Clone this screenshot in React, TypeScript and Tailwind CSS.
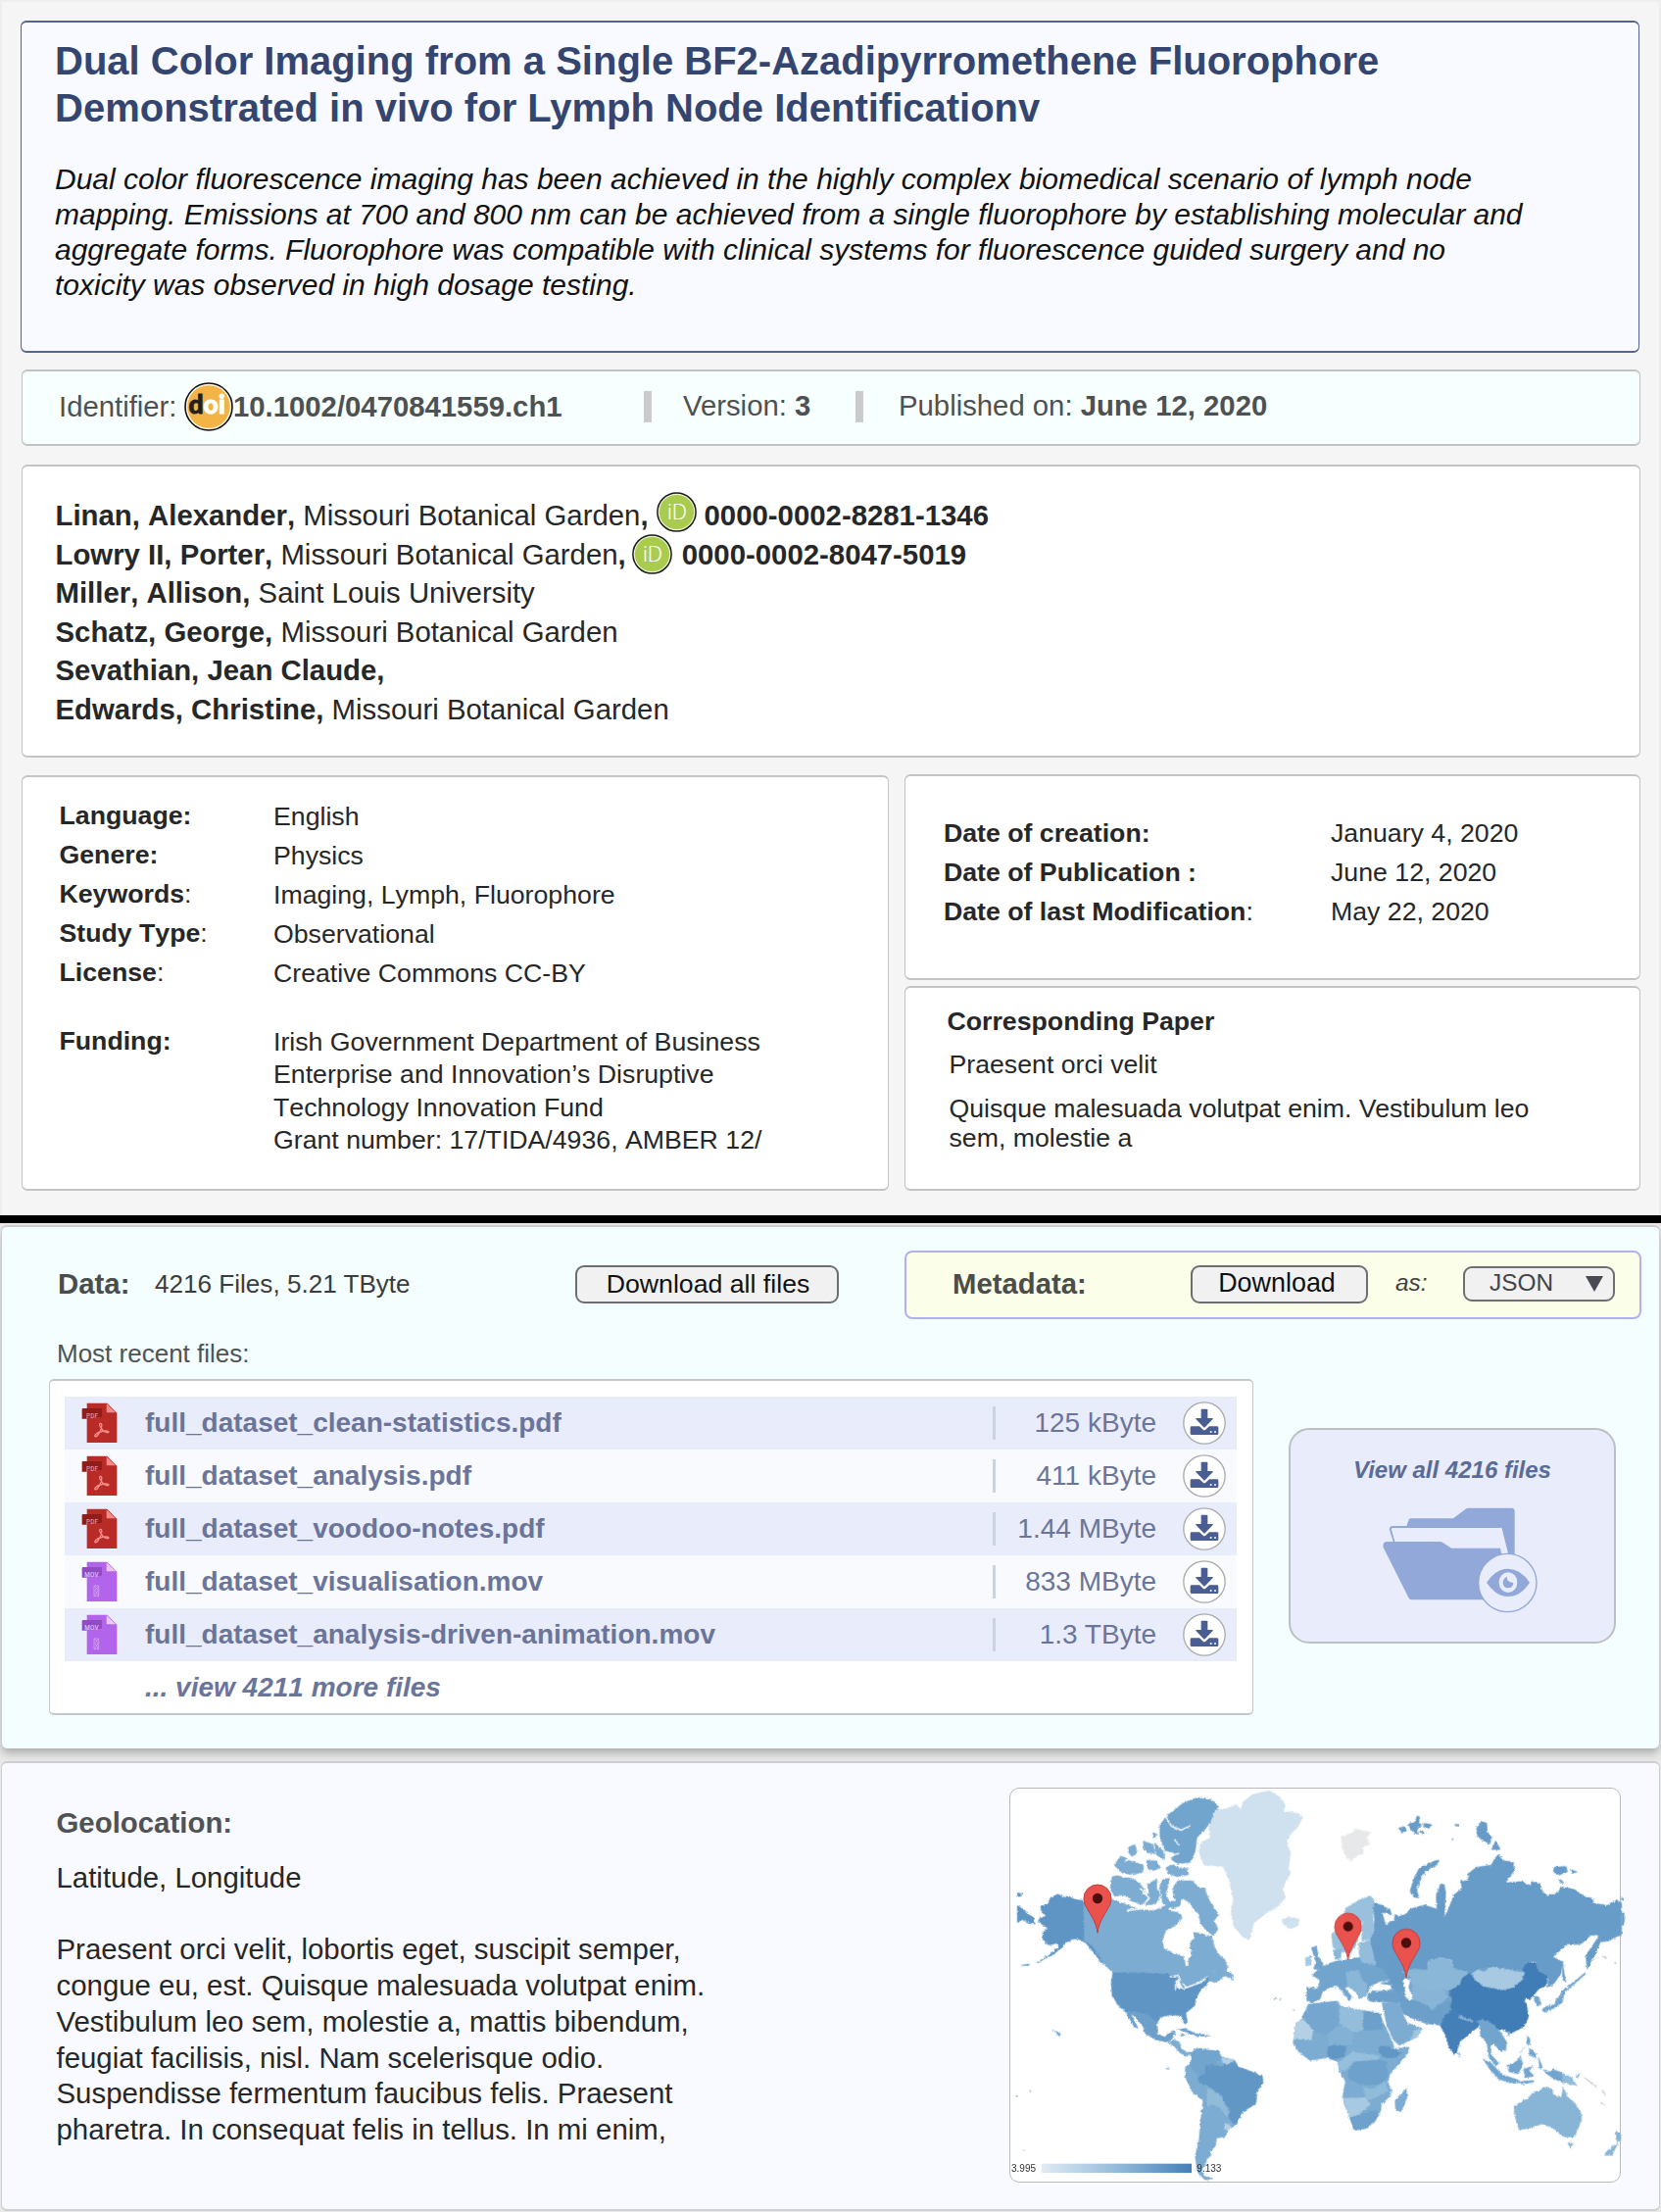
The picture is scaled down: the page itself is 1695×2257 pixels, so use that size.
import React from "react";

const authors = [
  { name: "Linan, Alexander,", place: "Missouri Botanical Garden", orcid: "0000-0002-8281-1346", badge: "ml-[8px] mr-[8px] -mt-[7px]" },
  { name: "Lowry II, Porter,", place: "Missouri Botanical Garden", orcid: "0000-0002-8047-5019", badge: "ml-[6px] mr-[10px]" },
  { name: "Miller, Allison,", place: "Saint Louis University" },
  { name: "Schatz, George,", place: "Missouri Botanical Garden" },
  { name: "Sevathian, Jean Claude,", place: "" },
  { name: "Edwards, Christine,", place: "Missouri Botanical Garden" },
];

const details = [
  { label: "Language:", tail: "", value: "English" },
  { label: "Genere:", tail: "", value: "Physics" },
  { label: "Keywords", tail: ":", value: "Imaging, Lymph, Fluorophore" },
  { label: "Study Type", tail: ":", value: "Observational" },
  { label: "License", tail: ":", value: "Creative Commons CC-BY" },
];

const dates = [
  { label: "Date of creation:", tail: "", value: "January 4, 2020" },
  { label: "Date of Publication :", tail: "", value: "June 12, 2020" },
  { label: "Date of last Modification", tail: ":", value: "May 22, 2020" },
];

const files = [
  { name: "full_dataset_clean-statistics.pdf", size: "125 kByte", kind: "PDF" },
  { name: "full_dataset_analysis.pdf", size: "411 kByte", kind: "PDF" },
  { name: "full_dataset_voodoo-notes.pdf", size: "1.44 MByte", kind: "PDF" },
  { name: "full_dataset_visualisation.mov", size: "833 MByte", kind: "MOV" },
  { name: "full_dataset_analysis-driven-animation.mov", size: "1.3 TByte", kind: "MOV" },
];

function DoiBadge() {
  return (
    <svg className="block h-[50px] w-[50px] shrink-0" viewBox="0 0 50 50">
      <circle cx="25" cy="25" r="24" fill="#fdf6e6" stroke="#111" strokeWidth="1.6" />
      <circle cx="25" cy="25" r="21.8" fill="#f4b445" />
      <text x="4.4" y="31.6" fontFamily="Lato" fontWeight="900" fontSize="26.5" fill="#231f20" stroke="#231f20" strokeWidth="0.9">d</text>
      <text x="19.6" y="31.6" fontFamily="Lato" fontWeight="900" fontSize="26.5" fill="#fff" stroke="#fff" strokeWidth="0.9">oi</text>
    </svg>
  );
}

function OrcidBadge({ className }: { className?: string }) {
  return (
    <svg className={`block h-[41px] w-[41px] shrink-0 ${className ?? ""}`} viewBox="0 0 41 41">
      <circle cx="20.5" cy="20.5" r="19.6" fill="#e9f3cd" stroke="#1c1c1c" strokeWidth="1.5" />
      <circle cx="20.5" cy="20.5" r="17.6" fill="#a9cb4f" />
      <text x="10.9" y="28.4" fontFamily="Open Sans" fontWeight="300" fontSize="21.5" fill="#fff" stroke="#fff" strokeWidth="0.2">iD</text>
    </svg>
  );
}

function FileIcon({ kind }: { kind: string }) {
  const pdf = kind === "PDF";
  return (
    <svg className="block h-[42px] w-[37px]" viewBox="0 0 111 126">
      <path d="M17 2h62l30 30v91H17z" fill={pdf ? "#b92b27" : "#b264ea"} />
      <path d="M77 4v27h28z" fill={pdf ? "#f58b86" : "#efc6fb"} />
      <path d="M2 21q0-3 3-3h54q4 0 4 3v20q0 4-4 4H17v5H2z" fill={pdf ? "#8f1d19" : "#8f4cc4"} />
      <text x={pdf ? 15 : 10} y="49" fontFamily="Roboto" fontWeight="500" fontSize="19" letterSpacing="0.5" fill={pdf ? "#e9928d" : "#dfc0f5"}>
        {kind}
      </text>
      {pdf ? (
        <path d="M58 64c7-1 5 12-1 25c-5 10-11 17-15 15c-4-3 7-12 16-14c10-3 25-5 26 0c0 4-12 3-19-6c-7-8-12-19-7-20z" fill="none" stroke="#f58b86" strokeWidth="4" />
      ) : (
        <g fill="none" stroke="#dcb0f7" strokeWidth="2">
          <path d="M39 75h14v32H39z" />
          <path d="M40 76l12 12-12 18M52 76L42 88l10 18" />
        </g>
      )}
    </svg>
  );
}

function DownloadIcon() {
  return (
    <svg className="block h-[44px] w-[44px]" viewBox="0 0 132 132">
      <circle cx="66" cy="66" r="63.5" fill="#fff" stroke="#aaacae" strokeWidth="4" />
      <path d="M58 23h16q2 0 2 2v26h14q4 0 2 3L68 79q-2 2-4 0L40 54q-2-3 2-3h14V25q0-2 2-2z" fill="#4a5e93" />
      <path d="M27 76h24l11 10q4 3 8 0l11-10h24q4 0 4 4v18q0 4-4 4H27q-4 0-4-4V80q0-4 4-4z" fill="#4a5e93" />
      <circle cx="86" cy="93" r="3" fill="#fff" />
      <circle cx="99" cy="93" r="3" fill="#fff" />
    </svg>
  );
}

function FolderIcon() {
  return (
    <svg className="block h-[110px] w-[162px]" viewBox="630 350 486 330">
      <path d="M708 412l8-21q2-4 6-4h130l38-29q3-3 8-3h132q10 0 10 10v140h-24l-16-92z" fill="#92a8d8" />
      <path d="M672 460l-12-38q-2-9 8-9h334" fill="none" stroke="#92a8d8" strokeWidth="6" />
      <path d="M664 423q-1-5 5-5h332l20 80h-20l-4-10-150-8-26-18H674z" fill="#e8ecfb" />
      <path d="M638 476q-4-17 12-18h162q4 0 8 3l27 17h149l3 14 60 120-80 24H724q-6 0-9-7z" fill="#92a8d8" />
      <circle cx="1018" cy="584" r="89" fill="#e8ecfb" stroke="#92a8d8" strokeWidth="4" />
      <path d="M954 583q28-42 66-42t66 42q-28 43-66 43t-66-43z" fill="#92a8d8" />
      <ellipse cx="1020" cy="583" rx="28" ry="31" fill="#e8ecfb" />
      <path d="M1017 565q-4 16 19 19q-1 16-16 16t-16-17q1-14 13-18z" fill="#92a8d8" />
    </svg>
  );
}

function Pin({ x, y, s = 1 }: { x: number; y: number; s?: number }) {
  return (
    <g transform={`translate(${x} ${y}) scale(${s})`}>
      <path d="M0 0C-4-32-18-50-32-75C-40-88-42-96-42-106A42 42 0 0 1 42-106C42-96 40-88 32-75C18-50 4-32 0 0z" fill="#ea524e" stroke="#bf3f3c" strokeWidth="3" />
      <circle cx="0" cy="-106" r="15.5" fill="#4d0d0b" />
    </g>
  );
}

function WorldMap() {
  return (
    <svg className="block h-[402px] w-[630px] overflow-visible" viewBox="33 45 1890 1206">
      <defs>
        <filter id="coast" x="-2%" y="-2%" width="104%" height="104%" colorInterpolationFilters="sRGB">
          <feTurbulence type="fractalNoise" baseFrequency="0.11" numOctaves="3" seed="4" result="n" />
          <feDisplacementMap in="SourceGraphic" in2="n" scale="9" xChannelSelector="R" yChannelSelector="G" />
        </filter>
        <linearGradient id="scale">
          <stop offset="0" stopColor="#e1ebf5" />
          <stop offset="0.5" stopColor="#93bbda" />
          <stop offset="1" stopColor="#457fb7" />
        </linearGradient>
      </defs>
      <g filter="url(#coast)">
        <path d="M258 400L360 395 470 430 500 500 500 600 380 640 345 607 258 510 240 500 240 400z" fill="#6c9fca" />
        <g fill="#5e95c4" stroke="#5e95c4" strokeWidth="2">
          <path d="M125 405L150 397 155 380 178 368 200 378 215 377 230 384 258 388V510L285 525 300 540 318 565 325 585 310 575 290 548 262 515 240 505 222 506 205 515 190 532 165 552 115 578 150 556 182 528 175 518 150 524 133 507 132 485 148 472 118 452 122 443 145 435 130 425z" />
          <path d="M55 403L75 415 88 430 103 438 108 460 90 455 70 446 55 455zM55 364l12 2v8l-12 1zM172 787l15 10-6 4zM66 586l24-4v4z" />
          <path d="M347 607L515 610 545 625 540 655 565 660 590 650 620 640 638 620 650 625 640 640 615 662 600 690 597 710 570 732 575 762 566 765 558 740 520 738 490 745 483 765 455 740 425 730 385 728 365 710 345 680 342 645z" />
        </g>
        <g fill="#7cacd1" stroke="#7cacd1" strokeWidth="3">
          <path d="M259 390L300 392 345 385 400 405 430 415 470 420 490 412 515 400 522 420 545 425 558 435 550 452 530 468 508 480 497 510 503 535 535 550 565 562 568 588 577 586 580 565 590 555 583 520 598 500 595 485 620 490 650 500 655 525 668 550 690 570 700 592 690 602 655 603 630 622 600 640 562 655 545 625 515 609 347 606 325 588 305 556 285 526 260 509z" />
          <path d="M345 315L362 312 380 318 405 320 425 332 440 350 448 372 462 362 450 340 482 322 480 350 490 370 485 390 465 400 430 398 395 385 382 372 352 375 340 350z" />
          <path d="M500 322L520 320 515 345 508 365 518 388 538 392 530 350 545 328 590 328 612 350 628 352 640 385 650 400 670 432 655 448 668 475 655 495 632 478 615 455 612 430 595 415 580 392 560 380 550 405 525 410 500 395 490 350z" />
          <path d="M352 280L370 252 388 258 378 275 395 265 440 280 438 300 410 308 375 302zM395 225l20-8 5 25-15 10-10-12zM440 205l30 12 5 28-25-5-8-15zM450 265l32 2 10 20-22 8-18-8zM470 180l8 2v12l-8-2zM475 212l32 30-5 20-22-15z" />
          <path d="M510 287L530 278 550 288 575 290 578 308 545 314 515 305z" />
          <path d="M635 610l30-5 15-10 10 8 25 10-2 15-22-10-30 20-18-5z" />
          <path d="M515 822L535 815 552 822 555 842 575 852 588 853 575 864 550 852 535 832z" />
        </g>
        <path d="M570 395l20 15 5 30 15 10-10 12-28 6-8-14 14-16z" fill="#fff" />
        <path d="M600 73L645 76 672 100 655 135 630 170 605 195 600 235 585 272 545 275 525 262 535 242 505 235 490 190 490 155 515 125 560 90z" fill="#72a5ce" />
        <path d="M508 130l18 30 30 12 28-14M535 200l15 18M500 240l30 10 20-8" fill="none" stroke="#fff" strokeWidth="4" />
        <path d="M430 350l28 30-16 20M345 380l30-6 26 10M390 418l60-8" fill="none" stroke="#fff" strokeWidth="5" />
        <path d="M520 622l26-6 8 16-14 6-2 22M560 640l12 14 22-8" fill="none" stroke="#fff" strokeWidth="4" />
        <path d="M660 110L700 105 725 92 738 110 745 85 775 62 825 50 860 70 875 95 870 115 905 118 930 132 915 160 885 190 880 215 892 240 885 290 892 302 868 350 875 380 850 408 815 428 800 440 780 455 765 510 745 500 715 465 708 420 715 385 703 330 685 285 625 280 610 240 615 210 645 195 640 165z" fill="#cfe0ee" />
        <path d="M862 445L885 438 917 443 915 465 890 475 870 462z" fill="#cfe0ee" />
        <path d="M385 728L425 730 455 740 483 765 485 795 505 805 520 790 540 788 530 808 515 822 480 815 445 795 440 775 415 745 403 735 425 778 412 775z" fill="#6c9fca" />
        <path d="M540 782L570 778 600 795 630 797 645 803 605 804 570 790zM555 795l15 5-15 3z" fill="#6c9fca" />

        <path d="M585 855L605 838 640 845 670 848 680 865 720 875 730 895 770 910 805 925 808 945 790 970 785 1010 760 1025 740 1040 725 1075 700 1090 690 1112 665 1115 662 1140 645 1155 650 1165 635 1180 630 1200 620 1210 625 1230 655 1238 630 1245 605 1220 598 1170 610 1120 615 1060 622 1000 590 975 567 925 568 900 585 885z" fill="#7cacd1" />
        <path d="M585 855L605 838 640 845 670 848 680 868 660 890 628 892 628 915 610 925 585 895z" fill="#72a5ce" />
        <path d="M628 892L660 890 680 895 700 885 720 878 730 897 770 910 805 925 808 945 790 970 785 1010 760 1025 740 1040 725 1075 700 1055 705 1030 685 1000 680 985 640 955 610 945 607 930 630 915z" fill="#6197c5" />
        <path d="M635 958L680 985 690 1012 705 1035 695 1048 672 1020 650 1012 635 1020z" fill="#90bbd9" />
        <path d="M680 868L720 875 705 888 682 885zM688 1066L712 1080 700 1092 688 1088z" fill="#b3d0e5" />
        <g fill="#8ea9bd">
          <path d="M50 984h6v4h-6zM92 968h4v4h-4zM513 900h6v5h-6zM842 684h5v5h-5zM856 688h5v3h-5zM898 720h5v4h-5zM160 783h6v3h-6zM72 1150h4v3h-4z" />
        </g>

        <g transform="translate(960 0)">
          <path d="M85 190L110 185 130 168 178 178 165 195 175 215 150 225 155 245 135 250 115 268 100 255 88 225z" fill="#e7e8e9" />
          <path d="M60 590L180 560 300 580 470 590 650 590 660 640 640 740 600 775 420 760 330 745 265 700 180 690 175 650 240 630 150 640 80 630z" fill="#72a5ce" />
          <g fill="#689cc8">
            <path d="M260 165l20-5 8 12-15 10zM290 152l20-4 8-20 10 4-4 18 12 6-18 12 6 18-14-4-12-12zM338 150l28 4-14 14-14-4zM320 175l22 2-4 8z" />
            <path d="M372 265L386 262 384 275 345 298 328 325 318 355 325 380 308 378 296 360 308 318 325 288z" />
            <path d="M500 165L515 145 532 150 535 178 548 195 542 215 520 205 500 190zM545 232l14-30 15 30zM737 285l38-3 5 18-25 10-20-8zM785 290l25 10-15 6zM755 320l15 14-15 0zM437 153l8 1v6h-8zM424 194l5 2v5l-5-1z" />
            <path d="M180 395L210 400 235 415 242 432 212 425 222 460 248 445 250 428 262 435 280 432 298 412 340 400 378 412 376 370 390 335 402 338 407 365 402 438 415 410 430 370 455 350 450 328 475 325 473 305 500 285 545 278 556 258 568 245 585 265 612 268 617 295 590 332 640 328 665 342 668 328 695 335 703 362 720 372 750 362 758 345 800 352 825 372 855 380 860 395 900 402 930 385 945 395V490L905 512 880 515 870 540 850 580 838 600 834 555 855 525 875 495 850 495 820 522 775 525 735 560 765 575 760 610 740 640 715 655 722 620 685 600 680 575 655 575 645 600 600 598 545 590 500 600 480 610 450 600 430 595 425 570 390 562 350 575 350 600 305 597 285 610 280 640 300 662 262 668 240 655 235 630 210 610 185 585 170 540 175 500 188 450z" />
            <path d="M765 568L768 600 775 640 762 625zM945 425h8v38h-8zM943 378l10 4-2 6-8-2z" />
          </g>
          <path d="M270 605L305 597 350 600 350 575 390 562 425 570 430 595 478 608 450 645 415 665 400 660 380 670 350 665 330 655 300 640 300 625z" fill="#8ab6d8" />
          <path d="M300 640L340 658 380 668 400 660 415 680 385 712 360 735 340 705 305 695z" fill="#88b4d7" />
          <path d="M258 665L300 690 350 708 365 725 385 705 420 695 435 715 400 742 388 770 345 765 310 752 275 735 262 700z" fill="#6c9fca" />
          <path d="M210 700L262 698 275 735 290 762 335 778 320 805 265 832 245 815 225 770z" fill="#7cacd1" />
          <path d="M335 778L320 805 298 815 310 785z" fill="#9fc5df" />
          <path d="M168 672L220 668 262 665 272 690 262 700 180 698 165 690z" fill="#6c9fca" />
          <path d="M415 665L450 645 455 625 480 608 495 630 520 648 575 660 610 653 640 632 648 608 640 600 655 575 680 578 690 602 722 620 712 650 690 660 668 688 645 690 655 710 660 745 645 775 600 797 580 782 555 785 520 752 490 758 450 742 420 715 425 690z" fill="#407db7" />
          <path d="M388 770L402 740 432 715 455 740 500 756 512 770 480 795 450 820 440 855 430 860 415 835 405 800z" fill="#457fb8" />
          <path d="M445 738l45 16v8l-42-14zM590 787l14 2-6 16zM442 850l10 8-5 8z" fill="#86b3d6" />
          <path d="M485 612L505 598 525 605 545 590 600 600 648 608 640 630 610 655 575 662 520 650 495 630z" fill="#a7cae2" />
          <path d="M-20 652L15 655 30 665 22 690 -5 702 -20 695z" fill="#72a5ce" />
          <path d="M-6 532L10 525 18 560 35 590 25 600 0 598 8 575zM15 600L42 582 70 572 110 567 145 560 182 580 215 600 235 630 205 638 175 655 162 680 142 690 128 665 108 652 98 655 122 685 112 695 75 650 50 655 30 668 15 655 20 632 -5 615z" fill="#72a5ce" />
          <path d="M-25 562l20-5v28l-18 4z" fill="#a7cae2" />
          <path d="M100 605l40-5 10 30 15 12-5 38-18 8-14-24-22-14-4-20z" fill="#8ab6d8" />
          <path d="M55 490L80 470 100 410 140 385 175 373 188 385 182 420 188 480 172 508 148 510 150 450 135 480 135 520 115 548 75 545 60 530z" fill="#99c1dd" />
          <path d="M140 515L175 508 192 585 150 577 140 550z" fill="#93bddb" />
          <path d="M60 540l28-5-3 32-18 2z" fill="#8ab6d8" />
          <path d="M70 656l8 2 4 26-10 2zM175 650l30-14 8 8 25 4 2 12-40 4-25-2z" fill="#fff" />

          <path d="M-15 705L40 698 75 695 85 715 130 733 150 722 205 732 215 760 235 800 250 840 295 835 290 855 265 885 235 920 230 945 240 965 238 985 210 1010 208 1030 190 1065 165 1085 125 1092 115 1060 90 1000 90 985 98 940 80 910 75 880 40 870 -10 878 -45 850 -62 825 -55 775 -30 740z" fill="#7cacd1" />
          <path d="M-15 705L40 698 72 695 80 765 40 800 0 785 -35 745z" fill="#74a6cf" />
          <path d="M-55 760L-30 750 0 785 -5 815 -60 812z" fill="#b3d0e5" />
          <path d="M80 708L155 725V785L125 790 80 765z" fill="#93bddb" />
          <path d="M155 727L205 732 215 782 155 785z" fill="#6c9fca" />
          <path d="M40 800L80 768 125 790 120 830 50 832z" fill="#82b1d5" />
          <path d="M45 835L70 828 103 835 95 865 60 875 42 862z" fill="#6197c5" />
          <path d="M120 850L205 862 200 875 125 880 100 910 80 905 78 882z" fill="#95bfdc" />
          <path d="M125 882L200 875 225 880 230 925 205 950 150 952 110 935 105 915z" fill="#6ea1cb" />
          <path d="M205 830L240 838 270 855 250 870 215 868 200 850z" fill="#6197c5" />
          <path d="M150 955l30 10 40-25 10 30-35 20-30 10z" fill="#90bbd9" />
          <path d="M90 992L160 990 175 1012 135 1050 108 1048z" fill="#a7cae2" />
          <path d="M112 1052L150 1040 190 1030 205 1040 165 1085 125 1092z" fill="#6ea1cb" />
          <path d="M285 962L290 985 270 1035 252 1030 250 1000z" fill="#7cacd1" />

          <g fill="#72a5ce" stroke="#72a5ce" strokeWidth="2">
            <path d="M510 760L535 755 570 785 592 820 590 845 575 850 555 828 542 832 545 860 568 885 560 895 540 870 532 825 512 800z" />
            <path d="M520 872L545 885 578 920 630 938 635 945 600 945 565 932 545 910zM595 892L622 880 635 865 642 890 628 918 600 912zM645 903L675 895 660 905 675 925 648 930zM655 802l8 8 2 20-12-5zM662 840l20 15v15l-20-10zM632 855l15-18M690 868l12 30-8 4zM635 942l40-4v5l-38 6z" />
            <path d="M705 905L725 912 735 905 762 915 768 945 740 935 715 918z" />
            <path d="M700 722L712 712 740 706 745 690 755 682 764 660 788 652 770 668 762 700 740 715 708 730zM672 680L690 682 698 705 685 712 680 695z" />
            <path d="M780 650l22-16 28-24 6 0-26 24-24 20z" />
          </g>
          <path d="M762 915L790 928 810 955 765 945zM800 925l20-10-6 14z" fill="#90bbd9" />
          <path d="M830 930l30 22 8 8M885 970l10 15M880 1005l12 10M885 558l14 4M922 576l6 3" stroke="#a5aeb5" strokeWidth="3" fill="none" />
          <path d="M615 1015L640 1002 660 990 672 975 700 965 702 958 735 965 735 980 760 990 765 955 780 990 800 1005 822 1040 822 1062 808 1095 800 1112 770 1112 750 1098 735 1085 700 1072 660 1085 630 1090 622 1065 615 1040z" fill="#88b4d6" />
          <path d="M778 1128L796 1130 788 1148zM925 1090L943 1105V1120L930 1130zM935 1128L915 1168 890 1168 902 1150z" fill="#88b4d6" />
          <path d="M282 625l16 4-6 24 14 34-12 8-14-14 2-28-8-18z" fill="#fff" />
        </g>
      </g>
      <Pin x={300} y={487} />
      <Pin x={1067} y={570} s={0.97} />
      <Pin x={1245} y={623} />
      <rect x="128" y="1193" width="460" height="28" fill="url(#scale)" />
      <text x="36" y="1218" fontFamily="Liberation Sans" fontSize="30" fill="#333">3.995</text>
      <text x="604" y="1218" fontFamily="Liberation Sans" fontSize="30" fill="#333">9.133</text>
    </svg>
  );
}

const card = "rounded-[6px] border-x border-y-2 border-[#c3c4c4] bg-white";
const button = "flex items-center justify-center rounded-[9px] border-2 border-[#6c6e70] bg-[#f1f1f2]";

export default function App() {
  return (
    <div className="flex h-[2257px] w-[1695px] flex-col overflow-hidden bg-[#e9e9ea] font-['Liberation_Sans',Arial,sans-serif] text-[#262728]">
      <section className="h-[1240px] border-t-2 border-x-2 border-[#eeeeee] bg-[#f5f5f5]">
        <header className="mt-[19px] ml-[19px] h-[339px] w-[1652px] rounded-[6px] border-x border-y-2 border-[#54668f] bg-[#f9faff] pt-[15px] pl-[34px]">
          <h1 className="text-[40px] leading-[48.3px] font-bold text-[#34466f]">
            Dual Color Imaging from a Single BF2-Azadipyrromethene Fluorophore
            <br />
            Demonstrated in vivo for Lymph Node Identificationv
          </h1>
          <p className="mt-[30px] text-[30px] leading-[36.1px] whitespace-nowrap text-[#111214] italic">
            Dual color fluorescence imaging has been achieved in the highly complex biomedical scenario of lymph node
            <br />
            mapping. Emissions at 700 and 800 nm can be achieved from a single fluorophore by establishing molecular and
            <br />
            aggregate forms. Fluorophore was compatible with clinical systems for fluorescence guided surgery and no
            <br />
            toxicity was observed in high dosage testing.
          </p>
        </header>

        <div className="mt-[17px] ml-[20px] flex h-[78px] w-[1652px] items-center rounded-[6px] border-x border-y-2 border-[#bfc3c3] bg-[#f8ffff] pb-[3px] pl-[37px] text-[29.3px] text-[#4e5152]">
          <span className="w-[128px]">Identifier:</span>
          <DoiBadge />
          <b className="w-[419px]">10.1002/0470841559.ch1</b>
          <i className="h-[32px] w-[8px] bg-[#cbcbcd]" />
          <span className="ml-[32px] w-[176px] pb-[2px]">
            Version: <b>3</b>
          </span>
          <i className="h-[32px] w-[8px] bg-[#cbcbcd]" />
          <span className="ml-[36px] pb-[2px]">
            Published on: <b>June 12, 2020</b>
          </span>
        </div>

        <div className={`${card} mt-[19px] ml-[20px] h-[299px] w-[1652px] pt-[30px] pl-[33.5px] text-[29.35px] [font-kerning:none]`}>
          {authors.map((a) => (
            <div key={a.name} className="flex h-[39.5px] items-center leading-[39.5px] whitespace-pre">
              <b>{a.name} </b>
              <span>{a.place}</span>
              {a.orcid && (
                <>
                  <b>,</b>
                  <OrcidBadge className={a.badge} />
                  <b>{a.orcid}</b>
                </>
              )}
            </div>
          ))}
        </div>

        <div className="mt-[17px] ml-[20px] flex gap-[16px] text-[26.7px]">
          <div className={`${card} mt-px h-[424px] w-[885px] pt-[19px] pl-[37.5px] [font-kerning:none]`}>
            {details.map((d) => (
              <div key={d.label} className="flex h-[40px] leading-[40px]">
                <div className="w-[218.5px]">
                  <b>{d.label}</b>
                  {d.tail}
                </div>
                <div className="pt-px">{d.value}</div>
              </div>
            ))}
            <div className="mt-[34px] flex leading-[33.3px]">
              <b className="w-[218.5px]">Funding:</b>
              <p className="pt-px">
                Irish Government Department of Business
                <br />
                Enterprise and Innovation’s Disruptive
                <br />
                Technology Innovation Fund
                <br />
                Grant number: 17/TIDA/4936, AMBER 12/
              </p>
            </div>
          </div>
          <div className="flex flex-col gap-[6px]">
            <div className={`${card} h-[210px] w-[751px] pt-[38px] pl-[39px]`}>
              {dates.map((d) => (
                <div key={d.label} className="flex h-[40.2px] leading-[40.2px]">
                  <div className="w-[395px]">
                    <b>{d.label}</b>
                    {d.tail}
                  </div>
                  <div>{d.value}</div>
                </div>
              ))}
            </div>
            <div className={`${card} h-[209px] w-[751px] pt-[18px] pl-[42.5px]`}>
              <h2 className="leading-[32px] font-bold">Corresponding Paper</h2>
              <p className="mt-[12px] ml-[2px] leading-[32px]">Praesent orci velit</p>
              <p className="mt-[15px] ml-[2px] leading-[29.6px]">
                Quisque malesuada volutpat enim. Vestibulum leo
                <br />
                sem, molestie a
              </p>
            </div>
          </div>
        </div>
      </section>

      <div className="h-[8px] shrink-0 bg-black" />

      <section className="mt-[2px] ml-px h-[534px] w-[1693px] shrink-0 rounded-[6px] border-x border-t-2 border-[#cbcfd0] bg-[#f4feff] pt-[24px] shadow-[0_6px_8px_-1px_rgba(80,85,80,0.4)]">
        <div className="flex h-[70px] items-center">
          <b className="mb-[2px] ml-[57px] w-[99px] text-[29.4px] text-[#4a4d4e]">Data:</b>
          <span className="w-[429px] text-[26.1px] text-[#3a3c3d]">4216 Files, 5.21 TByte</span>
          <div className={`${button} mb-px h-[39px] w-[269px] pb-[1px] pl-[2px] text-[26.7px] text-[#101112]`}>Download all files</div>
          <div className="ml-[67px] flex h-[70px] w-[752px] items-center rounded-[8px] border-2 border-[#b3b1ec] bg-[#fbffe9] pl-[47px]">
            <b className="mb-[2px] w-[243px] text-[29.3px] text-[#4c4d48]">Metadata:</b>
            <div className={`${button} mb-[2px] h-[39px] w-[181px] pr-[5px] pb-[1px] text-[26.9px] text-[#101112]`}>Download</div>
            <i className="mb-[4px] ml-[28px] w-[69px] text-[24.4px] text-[#3f403c]">as:</i>
            <div className={`${button} mb-[3px] h-[36px] w-[155px] gap-[33px] pl-[15px] text-[24.4px] text-[#434446]`}>
              JSON
              <svg className="h-[16px] w-[18px]" viewBox="0 0 18 16">
                <path d="M0 0h18L9 16z" fill="#4a4b52" />
              </svg>
            </div>
          </div>
        </div>

        <p className="mt-[19px] ml-[56px] text-[26px] leading-[32px] text-[#4f5354]">Most recent files:</p>

        <div className="mt-[10px] flex">
          <div className="ml-[48px] h-[343px] w-[1229px] rounded-[5px] border-x border-y-2 border-[#c3c6c7] bg-white pt-[16px] pl-[15px] text-[28px] text-[#6b7599]">
            {files.map((f, i) => (
              <div key={f.name} className={`flex h-[54px] w-[1196px] items-center ${i % 2 ? "bg-[#f9fafd]" : "bg-[#e9ecfb]"}`}>
                <div className="mr-[28px] ml-[17px]">
                  <FileIcon kind={f.kind} />
                </div>
                <b className="w-[865px]">{f.name}</b>
                <i className="h-[34px] w-[3px] bg-[#c9d3e6]" />
                <span className="w-[164px] text-right">{f.size}</span>
                <div className="ml-[27px]">
                  <DownloadIcon />
                </div>
              </div>
            ))}
            <div className="ml-[82px] leading-[54px] font-bold italic [font-kerning:none]">... view 4211 more files</div>
          </div>
          <div className="mt-[50px] ml-[36px] h-[220px] w-[334px] rounded-[21px] border-2 border-[#bcc0c2] bg-[#e8ecfb] pt-[25px]">
            <div className="text-center text-[24px] leading-[32px] font-bold text-[#5a6c95] italic">View all 4216 files</div>
            <div className="mt-[21px] ml-[92px]">
              <FolderIcon />
            </div>
          </div>
        </div>
      </section>

      <section className="mt-[13px] ml-px flex h-[459px] w-[1693px] shrink-0 justify-between rounded-[6px] border-x border-y-2 border-[#cfcfd2] bg-[#f9faff]">
        <div className="pt-[43px] pl-[55.5px] text-[29.4px] leading-[36.7px]">
          <h2 className="font-bold text-[#505256]">Geolocation:</h2>
          <p className="mt-[19px]">Latitude, Longitude</p>
          <p className="mt-[37px]">
            Praesent orci velit, lobortis eget, suscipit semper,
            <br />
            congue eu, est. Quisque malesuada volutpat enim.
            <br />
            Vestibulum leo sem, molestie a, mattis bibendum,
            <br />
            feugiat facilisis, nisl. Nam scelerisque odio.
            <br />
            Suspendisse fermentum faucibus felis. Praesent
            <br />
            pharetra. In consequat felis in tellus. In mi enim,
          </p>
        </div>
        <div className="mt-[25px] mr-[39px] h-[403px] w-[624px] rounded-[10px] border border-[#b9babd] bg-white">
          <WorldMap />
        </div>
      </section>
    </div>
  );
}
